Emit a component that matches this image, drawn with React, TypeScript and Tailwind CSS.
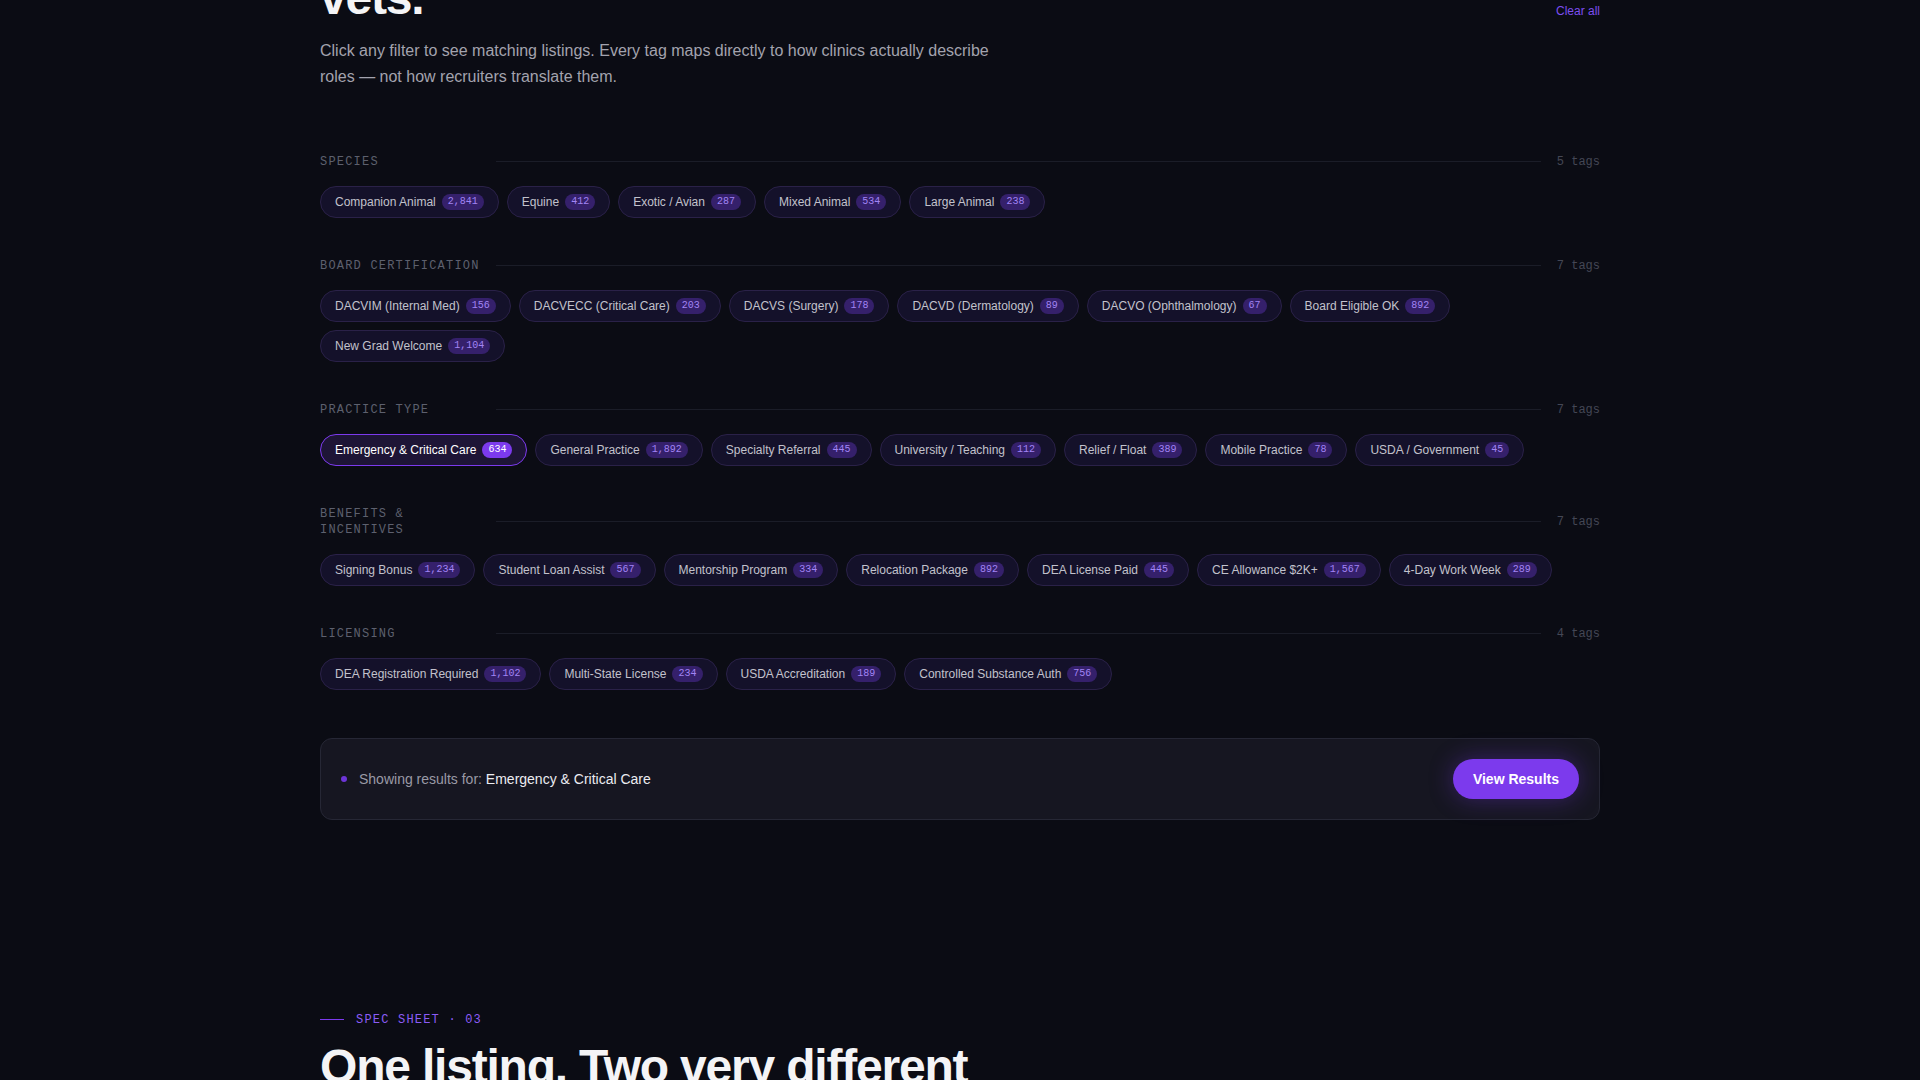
import React from "react";

type Tag = [string, string];
const groups: { label: string; tags: Tag[] }[] = [
  {
    label: "SPECIES",
    tags: [
      ["Companion Animal", "2,841"],
      ["Equine", "412"],
      ["Exotic / Avian", "287"],
      ["Mixed Animal", "534"],
      ["Large Animal", "238"],
    ],
  },
  {
    label: "BOARD CERTIFICATION",
    tags: [
      ["DACVIM (Internal Med)", "156"],
      ["DACVECC (Critical Care)", "203"],
      ["DACVS (Surgery)", "178"],
      ["DACVD (Dermatology)", "89"],
      ["DACVO (Ophthalmology)", "67"],
      ["Board Eligible OK", "892"],
      ["New Grad Welcome", "1,104"],
    ],
  },
  {
    label: "PRACTICE TYPE",
    tags: [
      ["Emergency & Critical Care", "634"],
      ["General Practice", "1,892"],
      ["Specialty Referral", "445"],
      ["University / Teaching", "112"],
      ["Relief / Float", "389"],
      ["Mobile Practice", "78"],
      ["USDA / Government", "45"],
    ],
  },
  {
    label: "BENEFITS & INCENTIVES",
    tags: [
      ["Signing Bonus", "1,234"],
      ["Student Loan Assist", "567"],
      ["Mentorship Program", "334"],
      ["Relocation Package", "892"],
      ["DEA License Paid", "445"],
      ["CE Allowance $2K+", "1,567"],
      ["4-Day Work Week", "289"],
    ],
  },
  {
    label: "LICENSING",
    tags: [
      ["DEA Registration Required", "1,102"],
      ["Multi-State License", "234"],
      ["USDA Accreditation", "189"],
      ["Controlled Substance Auth", "756"],
    ],
  },
];

const SELECTED = "Emergency & Critical Care";

function Chip({ name, count }: { name: string; count: string }) {
  const sel = name === SELECTED;
  return (
    <button
      className={
        sel
          ? "flex h-8 items-center gap-1.5 rounded-full border border-[#7c3aed] bg-[#1e1536] px-3.5 text-xs text-white"
          : "flex h-8 items-center gap-1.5 rounded-full border border-[#2a2148] bg-[#14112a] px-3.5 text-xs text-[#c2c2cc]"
      }
    >
      <span>{name}</span>
      <span
        className={
          sel
            ? "rounded-full bg-[#7c3aed] px-1.5 font-['Liberation_Mono',monospace] text-[10px] leading-[16px] text-white"
            : "rounded-full bg-[#35206b] px-1.5 font-['Liberation_Mono',monospace] text-[10px] leading-[16px] text-[#a284f5]"
        }
      >
        {count}
      </span>
    </button>
  );
}

export default function App() {
  return (
    <div className="min-h-screen overflow-hidden bg-[#0b0c14] font-['Liberation_Sans',Arial,sans-serif]">
      <div className="mx-auto w-[1280px]">
        <div className="-mt-[28px] flex items-start justify-between">
          <h2 className="text-[48px] font-bold leading-[1.1] tracking-tight text-[#f4f4f6]">vets.</h2>
          <button className="mt-[31px] text-xs text-[#7c4ef0]">Clear all</button>
        </div>
        <p className="mt-[13px] max-w-[680px] text-base leading-[26px] text-[#a3a3ae]">
          Click any filter to see matching listings. Every tag maps directly to how clinics actually describe roles — not how recruiters translate them.
        </p>

        <div className="mt-[64px] flex flex-col gap-10">
          {groups.map((g) => (
            <div key={g.label}>
              <div className="mb-4 flex items-center gap-4">
                <div className="w-40 shrink-0 font-['Liberation_Mono',monospace] text-xs tracking-[0.1em] text-[#5d606e]">
                  {g.label}
                </div>
                <div className="h-px flex-1 bg-[#1b1d28]" />
                <div className="font-['Liberation_Mono',monospace] text-xs leading-[16px] text-[#444755]">
                  {g.tags.length} tags
                </div>
              </div>
              <div className="flex flex-wrap gap-2">
                {g.tags.map(([n, c]) => (
                  <Chip key={n} name={n} count={c} />
                ))}
              </div>
            </div>
          ))}
        </div>

        <div className="mt-12 flex items-center justify-between rounded-xl border border-[#262735] bg-[#161621] px-5 py-5">
          <div className="flex items-center gap-3 text-sm">
            <span className="h-1.5 w-1.5 rounded-full bg-[#6d35d8]" />
            <span className="text-[#9a9aa6]">
              Showing results for: <span className="text-[#ececf1]">Emergency &amp; Critical Care</span>
            </span>
          </div>
          <button className="rounded-full bg-[#7c3aed] px-5 py-2.5 text-sm font-bold text-white shadow-[0_0_24px_rgba(124,58,237,0.35)]">
            View Results
          </button>
        </div>

        <div className="mt-[192px] flex items-center gap-3">
          <span className="h-px w-6 bg-[#7c3aed]" />
          <span className="font-['Liberation_Mono',monospace] text-xs tracking-[0.1em] text-[#8b5cf6]">SPEC SHEET · 03</span>
        </div>
        <h2 className="mt-[13px] text-[48px] font-bold leading-[1.1] tracking-tight text-[#f4f4f6]">
          One listing. Two very different
        </h2>
      </div>
    </div>
  );
}
